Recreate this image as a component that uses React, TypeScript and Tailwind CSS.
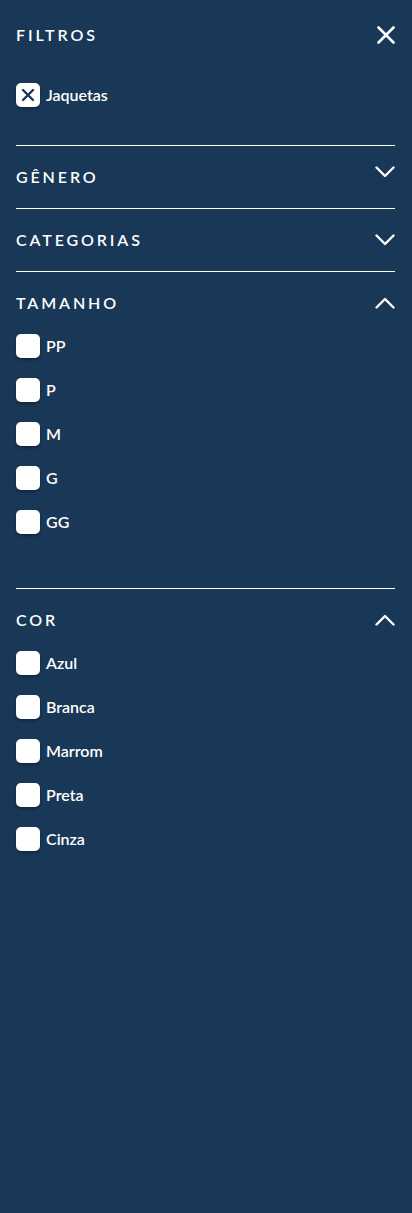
import React from "react";

const font = { fontFamily: "Lato, 'Noto Sans', sans-serif" };

function ChevronDown({ className = "" }: { className?: string }) {
  return (
    <svg width="20" height="12" viewBox="0 0 20 12" className={className} fill="none">
      <path d="M1.5 1.5 L10 10 L18.5 1.5" stroke="white" strokeWidth="2.4" strokeLinecap="round" strokeLinejoin="round" />
    </svg>
  );
}
function ChevronUp({ className = "" }: { className?: string }) {
  return (
    <svg width="20" height="12" viewBox="0 0 20 12" className={className} fill="none">
      <path d="M1.5 10.5 L10 2 L18.5 10.5" stroke="white" strokeWidth="2.4" strokeLinecap="round" strokeLinejoin="round" />
    </svg>
  );
}

function Box({ checked = false }: { checked?: boolean }) {
  return (
    <div className="w-6 h-6 rounded-[5px] bg-white shadow-[0_2px_3px_rgba(0,0,0,0.3)] flex items-center justify-center shrink-0">
      {checked && (
        <svg width="14" height="14" viewBox="0 0 14 14" fill="none">
          <path d="M2 2 L12 12 M12 2 L2 12" stroke="#193757" strokeWidth="2.4" strokeLinecap="round" />
        </svg>
      )}
    </div>
  );
}

function Item({ label, checked = false }: { label: string; checked?: boolean }) {
  return (
    <div className="flex items-center h-6">
      <Box checked={checked} />
      <span className="ml-[6px] text-white text-[16px] font-semibold leading-none">{label}</span>
    </div>
  );
}

function Section({ title, open, items, up, shiftChevron }: { title: string; open?: boolean; items?: string[]; up?: boolean; shiftChevron?: boolean }) {
  return (
    <div className="border-t border-white">
      <div className="h-[62px] flex items-center justify-between">
        <span className="text-white text-[16px] font-semibold tracking-[0.18em] leading-none">{title}</span>
        {up ? <ChevronUp /> : <ChevronDown className={shiftChevron ? "mb-[11px]" : ""} />}
      </div>
      {open && items && (
        <div className="flex flex-col gap-5 pb-[54px]">
          {items.map((i) => (
            <Item key={i} label={i} />
          ))}
        </div>
      )}
    </div>
  );
}

export default function App() {
  return (
    <div className="w-full min-h-[1213px] bg-[#193757] pl-4 pr-[17px]" style={font}>
      <div className="h-[70px] flex items-center justify-between">
        <span className="text-white text-[16px] font-semibold tracking-[0.18em] leading-none">FILTROS</span>
        <svg width="18" height="18" viewBox="0 0 18 18" fill="none">
          <path d="M1.5 1.5 L16.5 16.5 M16.5 1.5 L1.5 16.5" stroke="white" strokeWidth="2.6" strokeLinecap="round" />
        </svg>
      </div>
      <div className="mt-[13px] mb-[38px]">
        <Item label="Jaquetas" checked />
      </div>
      <Section title="GÊNERO" shiftChevron />
      <Section title="CATEGORIAS" />
      <Section title="TAMANHO" up open items={["PP", "P", "M", "G", "GG"]} />
      <Section title="COR" up open items={["Azul", "Branca", "Marrom", "Preta", "Cinza"]} />
    </div>
  );
}
